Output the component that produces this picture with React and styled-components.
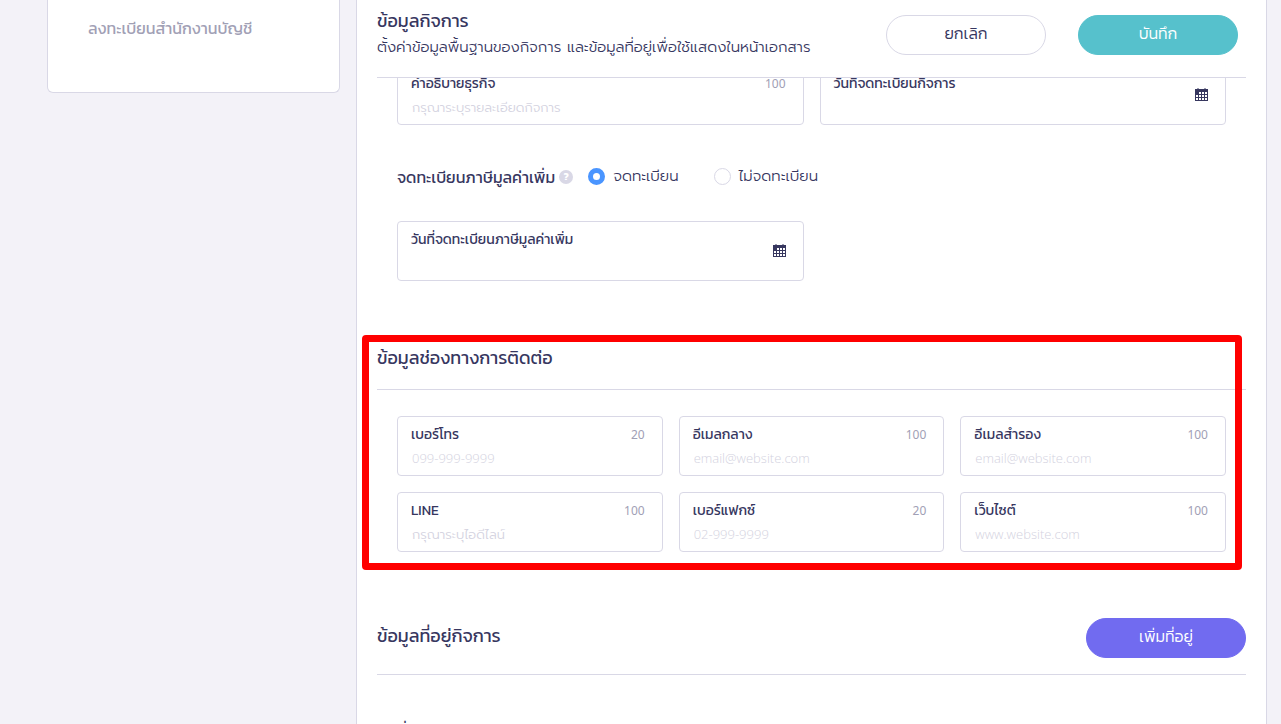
import React, { useState } from "react"
import styled, { createGlobalStyle } from "styled-components"

const businessFields = [
  {
    id: "description",
    label: "คำอธิบายธุรกิจ",
    limit: 100,
    placeholder: "กรุณาระบุรายละเอียดกิจการ",
  },
  { id: "registered-date", label: "วันที่จดทะเบียนกิจการ", date: true },
]

const contactFields = [
  { id: "phone", label: "เบอร์โทร", limit: 20, placeholder: "099-999-9999" },
  {
    id: "email",
    label: "อีเมลกลาง",
    limit: 100,
    placeholder: "email@website.com",
  },
  {
    id: "backup-email",
    label: "อีเมลสำรอง",
    limit: 100,
    placeholder: "email@website.com",
  },
  { id: "line", label: "LINE", limit: 100, placeholder: "กรุณาระบุไอดีไลน์" },
  { id: "fax", label: "เบอร์แฟกซ์", limit: 20, placeholder: "02-999-9999" },
  {
    id: "website",
    label: "เว็บไซต์",
    limit: 100,
    placeholder: "www.website.com",
  },
]

const CalendarIcon = () => (
  <svg width="13" height="13" viewBox="0 0 13 13" aria-hidden="true">
    <path fill="currentColor" opacity="0.5" d="M2 0h2v1H2zM9 0h2v1H9z" />
    <path
      fill="currentColor"
      fillRule="evenodd"
      d="M0 1h13v12H0zM4 4v2h2V4zM7 4v2h2V4zM10 4v2h2V4zM1 7v2h2V7zM4 7v2h2V7zM7 7v2h2V7zM10 7v2h2V7zM1 10v2h2v-2zM4 10v2h2v-2zM7 10v2h2v-2zM10 10v2h2v-2z"
    />
  </svg>
)

const Field = ({ id, label, limit, placeholder, date }) => (
  <FieldBox>
    <FieldBody>
      <FieldTop>
        <FieldLabel htmlFor={id}>{label}</FieldLabel>
        {limit && <Counter>{limit}</Counter>}
      </FieldTop>
      <FieldInput id={id} type="text" maxLength={limit} placeholder={placeholder} />
    </FieldBody>
    {date && (
      <DateButton type="button" aria-label={label}>
        <CalendarIcon />
      </DateButton>
    )}
  </FieldBox>
)

const App = () => {
  const [vat, setVat] = useState("yes")
  return (
    <Page>
      <GlobalStyle />
      <Sidebar>
        <SideLink href="#accounting">ลงทะเบียนสำนักงานบัญชี</SideLink>
      </Sidebar>
      <Panel>
        <Header>
          <div>
            <Title>ข้อมูลกิจการ</Title>
            <Subtitle>
              ตั้งค่าข้อมูลพื้นฐานของกิจการ และข้อมูลที่อยู่เพื่อใช้แสดงในหน้าเอกสาร
            </Subtitle>
          </div>
          <Actions>
            <Button type="button">ยกเลิก</Button>
            <Button type="button" $color="#56c1cc">
              บันทึก
            </Button>
          </Actions>
        </Header>
        <Scroll>
          <Business>
            <FieldGrid $columns={2}>
              {businessFields.map(field => (
                <Field key={field.id} {...field} />
              ))}
            </FieldGrid>
            <VatRow>
              <VatLabel id="vat-label">จดทะเบียนภาษีมูลค่าเพิ่ม</VatLabel>
              <Help type="button">?</Help>
              <Options role="radiogroup" aria-labelledby="vat-label">
                <Option>
                  <Radio
                    name="vat"
                    checked={vat === "yes"}
                    onChange={() => setVat("yes")}
                  />
                  จดทะเบียน
                </Option>
                <Option>
                  <Radio
                    name="vat"
                    checked={vat === "no"}
                    onChange={() => setVat("no")}
                  />
                  ไม่จดทะเบียน
                </Option>
              </Options>
            </VatRow>
            <FieldGrid $columns={2}>
              <Field id="vat-date" label="วันที่จดทะเบียนภาษีมูลค่าเพิ่ม" date />
            </FieldGrid>
          </Business>
          <Contact>
            <ContactHead>
              <Title>ข้อมูลช่องทางการติดต่อ</Title>
            </ContactHead>
            <ContactBody>
              <FieldGrid $columns={3}>
                {contactFields.map(field => (
                  <Field key={field.id} {...field} />
                ))}
              </FieldGrid>
            </ContactBody>
            <Highlight />
          </Contact>
          <AddressHead>
            <Title>ข้อมูลที่อยู่กิจการ</Title>
            <Button type="button" $color="#716bf0">
              เพิ่มที่อยู่
            </Button>
          </AddressHead>
          <AddressBody>ที่อยู่</AddressBody>
        </Scroll>
      </Panel>
    </Page>
  )
}

export default App

const GlobalStyle = createGlobalStyle`
  * {
    box-sizing: border-box;
  }
  body {
    margin: 0;
    background: #f3f2f8;
    color: #37375f;
    font-family: Kanit, "Noto Sans Thai", "Noto Sans", sans-serif;
    font-size: 14px;
  }
  button, input {
    font-family: inherit;
    color: inherit;
  }
`
const Page = styled.div`
  display: grid;
  grid-template-columns: 293px minmax(0, 1fr);
  gap: 16px;
  height: 100vh;
  padding: 0 14px 0 47px;
  overflow: hidden;
`
const Sidebar = styled.nav`
  align-self: start;
  padding: 16px 40px 52px;
  background: #fff;
  border: 1px solid #d9d8e6;
  border-top: 0;
  border-radius: 0 0 6px 6px;
`
const SideLink = styled.a`
  display: block;
  color: #a1a0b5;
  font-size: 16px;
  font-weight: 400;
  line-height: 24px;
  text-decoration: none;
  white-space: nowrap;
`
const Panel = styled.main`
  display: flex;
  flex-direction: column;
  min-height: 0;
  background: #fff;
  border: solid #d9d8e6;
  border-width: 0 1px;
`
const Header = styled.header`
  display: flex;
  flex-shrink: 0;
  align-items: flex-start;
  justify-content: space-between;
  height: 78px;
  margin: 0 20px;
  padding: 8px 8px 0 0;
  border-bottom: 1px solid #d9d8e6;
`
const Title = styled.h2`
  margin: 0;
  font-size: 18px;
  font-weight: 400;
  line-height: 26px;
  white-space: nowrap;
`
const Subtitle = styled.p`
  margin: 0;
  font-family: Prompt, Kanit, "Noto Sans Thai", sans-serif;
  font-size: 15px;
  font-weight: 300;
  line-height: 26px;
  white-space: nowrap;
`
const Actions = styled.div`
  display: flex;
  gap: 32px;
  padding-top: 7px;
`
const Button = styled.button`
  width: 160px;
  height: 40px;
  padding: 0 0 4px;
  color: ${props => (props.$color ? "#fff" : "#37375f")};
  font-size: 16px;
  font-weight: 300;
  background: ${props => props.$color || "#fff"};
  border: 1px solid ${props => props.$color || "#d9d8e6"};
  border-radius: 20px;
  cursor: pointer;
`
const Scroll = styled.div`
  flex: 1;
  min-height: 0;
  padding: 0 20px;
  overflow: hidden;
`
/* the first row is partly scrolled under the header */
const Business = styled.section`
  margin-top: -13px;
  padding: 0 20px;
`
const FieldGrid = styled.div`
  display: grid;
  grid-template-columns: repeat(${props => props.$columns}, minmax(0, 1fr));
  gap: 16px;
`
const FieldBox = styled.div`
  display: flex;
  align-items: center;
  justify-content: space-between;
  height: 60px;
  padding: 0 17px 0 13px;
  background: #fff;
  border: 1px solid #d9d8e6;
  border-radius: 4px;
`
const FieldBody = styled.div`
  flex: 1;
  min-width: 0;
`
const FieldTop = styled.div`
  display: flex;
  align-items: center;
  justify-content: space-between;
`
const FieldLabel = styled.label`
  font-size: 14px;
  font-weight: 400;
  line-height: 26px;
  white-space: nowrap;
`
const Counter = styled.span`
  color: #a1a0b5;
  font-family: "Noto Sans", sans-serif;
  font-size: 12px;
  line-height: 24px;
`
const FieldInput = styled.input`
  display: block;
  width: 100%;
  height: 22px;
  padding: 0 1px 3px;
  font-family: "Open Sans", Prompt, Kanit, "Noto Sans Thai", sans-serif;
  font-size: 13px;
  font-weight: 300;
  background: transparent;
  border: 0;
  outline: 0;
  &::placeholder {
    color: #d3d2e0;
    opacity: 1;
  }
`
const DateButton = styled.button`
  display: flex;
  padding: 0 0 2px;
  background: none;
  border: 0;
  cursor: pointer;
`
const VatRow = styled.div`
  display: flex;
  align-items: center;
  height: 24px;
  margin: 40px 0 32px;
`
const VatLabel = styled.span`
  font-size: 16px;
  font-weight: 400;
  white-space: nowrap;
`
const Help = styled.button`
  width: 14px;
  height: 14px;
  margin: 0 15px 0 4px;
  padding: 0;
  color: #fff;
  font-size: 10px;
  font-weight: 700;
  line-height: 14px;
  background: #d9d8e6;
  border: 0;
  border-radius: 50%;
`
const Options = styled.div`
  display: flex;
  gap: 35px;
  padding-bottom: 2px;
`
const Option = styled.label`
  display: flex;
  align-items: center;
  gap: 8px;
  font-family: Prompt, Kanit, "Noto Sans Thai", sans-serif;
  font-size: 15px;
  font-weight: 300;
  white-space: nowrap;
`
const Radio = styled.input.attrs({ type: "radio" })`
  appearance: none;
  width: 17px;
  height: 17px;
  margin: 0;
  background: #fff;
  border: 1px solid #d9d8e6;
  border-radius: 50%;
  &:checked {
    border: 5px solid #4a95ff;
  }
`
const Contact = styled.section`
  position: relative;
  margin-top: 54px;
`
const ContactHead = styled.div`
  height: 55px;
  padding-top: 10px;
  border-bottom: 1px solid #d9d8e6;
`
const ContactBody = styled.div`
  padding: 26px 20px 18px;
`
const Highlight = styled.div`
  position: absolute;
  top: 0;
  right: 4px;
  bottom: 0;
  left: -15px;
  border: 7px solid #f00;
  border-radius: 4px;
  pointer-events: none;
`
const AddressHead = styled.div`
  display: flex;
  align-items: flex-start;
  justify-content: space-between;
  height: 57px;
  margin-top: 48px;
  border-bottom: 1px solid #d9d8e6;
  ${Title} {
    padding-top: 5px;
  }
`
const AddressBody = styled.div`
  padding: 43px 20px 0;
  font-size: 16px;
  font-weight: 400;
  line-height: 26px;
`
